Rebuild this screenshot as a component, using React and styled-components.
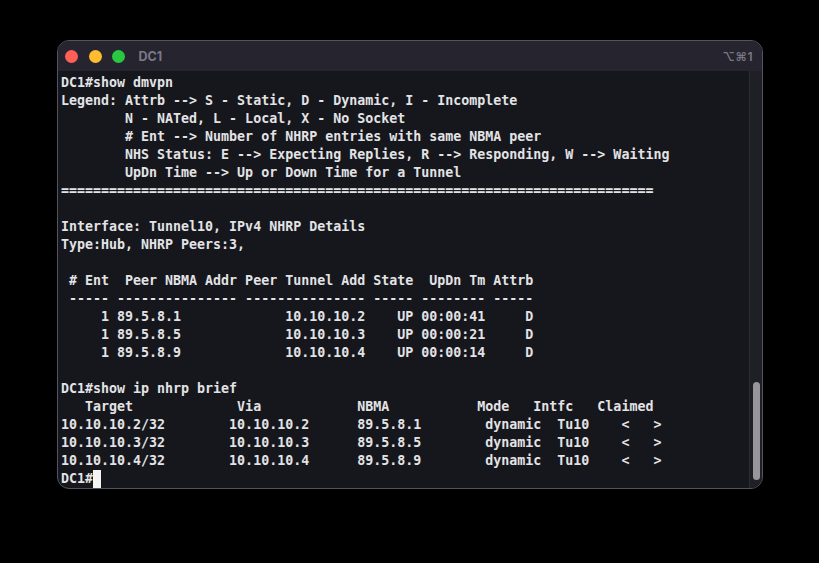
import React from 'react';
import styled, { createGlobalStyle } from 'styled-components';

const GlobalStyle = createGlobalStyle`
  html, body {
    margin: 0;
    padding: 0;
    background: #000;
  }
`;

const Page = styled.div`
  width: 819px;
  height: 563px;
  background: #000;
  padding: 40px 0 0 57px;
  box-sizing: border-box;
`;

const Window = styled.div`
  width: 706px;
  height: 449px;
  box-sizing: border-box;
  border: 1px solid #55535e;
  border-radius: 12px;
  overflow: hidden;
  display: flex;
  flex-direction: column;
  background: #16171c;
`;

const TitleBar = styled.div`
  height: 30px;
  flex-shrink: 0;
  background: #26242f;
  display: flex;
  align-items: center;
  padding: 0 9px 0 7px;
  font-family: Inter, "Liberation Sans", sans-serif;
`;

const Light = styled.span`
  width: 13px;
  height: 13px;
  border-radius: 50%;
  background: ${(p) => p.color};
  margin-right: 10.5px;
`;

const Title = styled.div`
  margin-left: 3px;
  font-size: 12.5px;
  font-weight: 700;
  color: #7b7986;
  flex: 1;
`;

const Shortcut = styled.div`
  font-size: 12px;
  font-weight: 600;
  color: #7b7986;
  letter-spacing: 0.5px;
`;

const Body = styled.div`
  flex: 1;
  display: flex;
  min-height: 0;
`;

const Screen = styled.div`
  flex: 1;
  padding: 3px 0 0 3px;
  font-family: "DejaVu Sans Mono", monospace;
  font-weight: 700;
  font-size: 13.3px;
  color: #e3e3e6;
`;

const Line = styled.div`
  height: 18px;
  line-height: 18px;
  white-space: pre;
`;

const Cursor = styled.span`
  display: inline-block;
  width: 8px;
  height: 18px;
  background: #f4f4f4;
  vertical-align: top;
`;

const Track = styled.div`
  width: 12px;
  flex-shrink: 0;
  background: #1f2025;
  border-left: 1px solid #2c2d33;
  display: flex;
  flex-direction: column;
  justify-content: flex-end;
  align-items: center;
  padding-bottom: 8px;
`;

const Thumb = styled.div`
  width: 7px;
  height: 98px;
  border-radius: 4px;
  background: #96969b;
`;

const lines = [
  'DC1#show dmvpn',
  'Legend: Attrb --> S - Static, D - Dynamic, I - Incomplete',
  '        N - NATed, L - Local, X - No Socket',
  '        # Ent --> Number of NHRP entries with same NBMA peer',
  '        NHS Status: E --> Expecting Replies, R --> Responding, W --> Waiting',
  '        UpDn Time --> Up or Down Time for a Tunnel',
  '='.repeat(74),
  '',
  'Interface: Tunnel10, IPv4 NHRP Details',
  'Type:Hub, NHRP Peers:3,',
  '',
  ' # Ent  Peer NBMA Addr Peer Tunnel Add State  UpDn Tm Attrb',
  ' ----- --------------- --------------- ----- -------- -----',
  '     1 89.5.8.1             10.10.10.2    UP 00:00:41     D',
  '     1 89.5.8.5             10.10.10.3    UP 00:00:21     D',
  '     1 89.5.8.9             10.10.10.4    UP 00:00:14     D',
  '',
  'DC1#show ip nhrp brief',
  '   Target             Via            NBMA           Mode   Intfc   Claimed',
  '10.10.10.2/32        10.10.10.2      89.5.8.1        dynamic  Tu10    <   >',
  '10.10.10.3/32        10.10.10.3      89.5.8.5        dynamic  Tu10    <   >',
  '10.10.10.4/32        10.10.10.4      89.5.8.9        dynamic  Tu10    <   >',
];

export default function App() {
  return (
    <Page>
      <GlobalStyle />
      <Window>
        <TitleBar>
          <Light color="#fe5f57" />
          <Light color="#febc2e" />
          <Light color="#28c840" />
          <Title>DC1</Title>
          <Shortcut>⌥⌘1</Shortcut>
        </TitleBar>
        <Body>
          <Screen>
            {lines.map((l, i) => (
              <Line key={i}>{l}</Line>
            ))}
            <Line>
              DC1#<Cursor />
            </Line>
          </Screen>
          <Track>
            <Thumb />
          </Track>
        </Body>
      </Window>
    </Page>
  );
}
